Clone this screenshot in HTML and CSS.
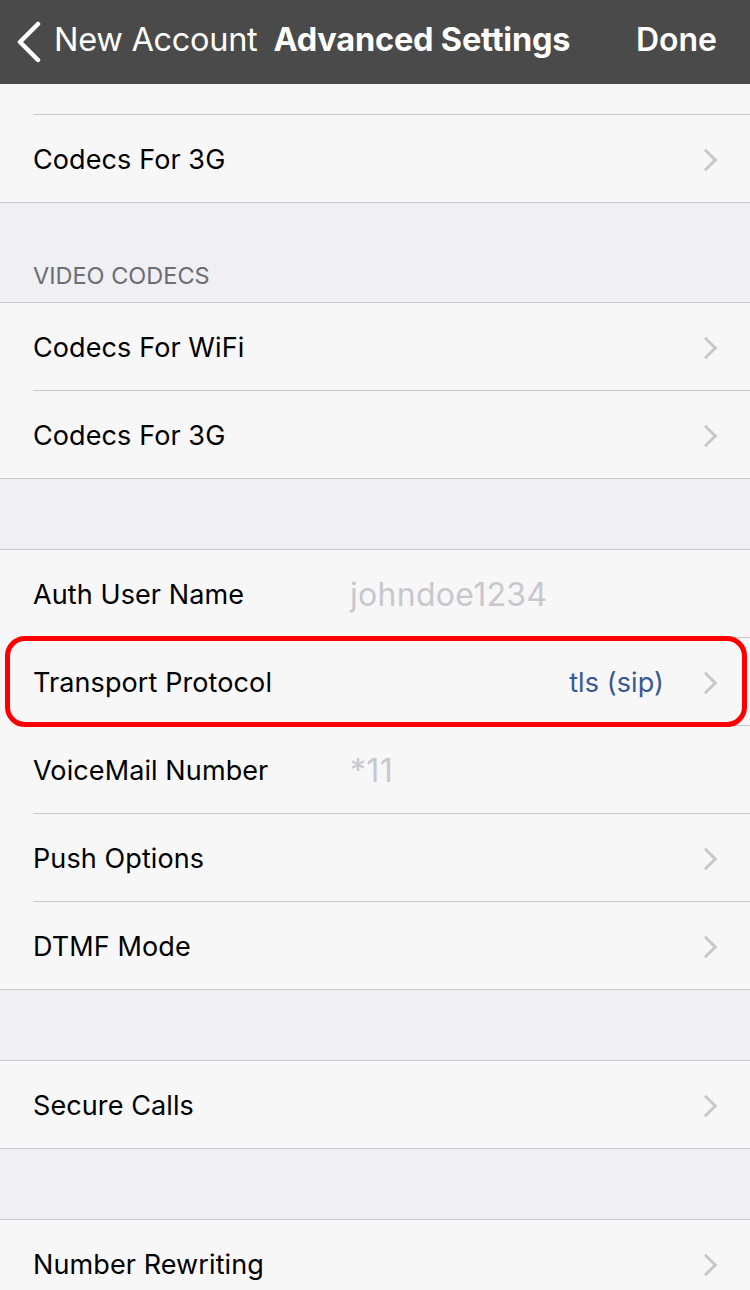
FILE: index.html
```html
<!DOCTYPE html>
<html lang="en">

<head>
    <meta charset="UTF-8">
    <meta name="viewport" content="width=device-width, initial-scale=1.0">
    <title>Advanced Settings</title>
    <link rel="stylesheet" href="styles.css">
</head>

<body>
    <div class="navbar">
        <a class="back">
            <svg class="back-icon" width="28" height="42" viewBox="0 0 28 42">
                <polyline points="23,3 5,21 23,39" fill="none" stroke="#fff" stroke-width="4.5" stroke-linecap="round" stroke-linejoin="round"/>
            </svg>
            <span>New Account</span>
        </a>
        <span class="title">Advanced Settings</span>
        <a class="done">Done</a>
    </div>

    <div class="group first">
        <div class="row short"><div class="row-body"></div></div>
        <div class="row">
            <div class="row-body">
                <span class="label">Codecs For 3G</span>
                <span class="chevron"></span>
            </div>
        </div>
    </div>

    <div class="section-header">VIDEO CODECS</div>
    <div class="group">
        <div class="row">
            <div class="row-body">
                <span class="label">Codecs For WiFi</span>
                <span class="chevron"></span>
            </div>
        </div>
        <div class="row">
            <div class="row-body">
                <span class="label">Codecs For 3G</span>
                <span class="chevron"></span>
            </div>
        </div>
    </div>

    <div class="spacer"></div>
    <div class="group">
        <div class="row">
            <div class="row-body">
                <span class="label fixed">Auth User Name</span>
                <span class="placeholder">johndoe1234</span>
            </div>
        </div>
        <div class="row highlighted">
            <div class="row-body">
                <span class="label">Transport Protocol</span>
                <span class="value">tls (sip)</span>
                <span class="chevron"></span>
            </div>
        </div>
        <div class="row">
            <div class="row-body">
                <span class="label fixed">VoiceMail Number</span>
                <span class="placeholder">*11</span>
            </div>
        </div>
        <div class="row">
            <div class="row-body">
                <span class="label">Push Options</span>
                <span class="chevron"></span>
            </div>
        </div>
        <div class="row">
            <div class="row-body">
                <span class="label">DTMF Mode</span>
                <span class="chevron"></span>
            </div>
        </div>
    </div>

    <div class="spacer"></div>
    <div class="group">
        <div class="row">
            <div class="row-body">
                <span class="label">Secure Calls</span>
                <span class="chevron"></span>
            </div>
        </div>
    </div>

    <div class="spacer"></div>
    <div class="group">
        <div class="row">
            <div class="row-body">
                <span class="label">Number Rewriting</span>
                <span class="chevron"></span>
            </div>
        </div>
    </div>
</body>

</html>
```

FILE: styles.css
```css
body {
    margin: 0;
    font-family: 'Inter', 'Liberation Sans', sans-serif;
    background-color: #efeff4;
    color: #000;
    width: 750px;
    height: 1290px;
    overflow: hidden;
}

.navbar {
    height: 84px;
    background-color: #4a4a4a;
    color: #fff;
    display: flex;
    align-items: center;
    padding: 0 33px 5px 15px;
    box-sizing: border-box;
}

.back {
    display: flex;
    align-items: center;
    font-size: 32.5px;
    letter-spacing: -0.3px;
}

.back-icon {
    margin-right: 11px;
    margin-top: 4px;
}

.title {
    margin-left: 16px;
    font-size: 32.5px;
    font-weight: 700;
    letter-spacing: -0.2px;
}

.done {
    margin-left: auto;
    font-size: 32px;
    font-weight: 600;
}

.group {
    background-color: #f7f7f7;
    border-top: 1px solid #c8c7cc;
    border-bottom: 1px solid #c8c7cc;
}

.group.first {
    border-top: none;
}

.row {
    padding-left: 33px;
    position: relative;
}

.row-body {
    height: 88px;
    display: flex;
    align-items: center;
    padding: 2px 33px 0 0;
    box-sizing: border-box;
    border-bottom: 1px solid #c8c7cc;
    font-size: 27px;
    letter-spacing: 0.1px;
}

.row:last-child .row-body {
    border-bottom: none;
    height: 87px;
}

.row.short .row-body {
    height: 31px;
}

.label {
    flex: 1;
}

.label.fixed {
    flex: 0 0 317px;
}

.placeholder {
    color: #c7c7cd;
    font-size: 32px;
    letter-spacing: 0.3px;
}

.value {
    color: #385894;
    margin-right: 34px;
}

.chevron {
    width: 13px;
    height: 13px;
    border-top: 3px solid #c7c7cc;
    border-right: 3px solid #c7c7cc;
    transform: rotate(45deg);
    margin-right: 3px;
}

.highlighted::after {
    content: "";
    position: absolute;
    top: -2px;
    bottom: -1px;
    left: 5px;
    right: 3px;
    border: 5px solid #ff0000;
    border-radius: 20px;
}

.section-header {
    height: 99px;
    display: flex;
    align-items: flex-end;
    padding: 0 0 12px 33px;
    box-sizing: border-box;
    color: #6d6d72;
    font-size: 23.5px;
}

.spacer {
    height: 70px;
}
```
